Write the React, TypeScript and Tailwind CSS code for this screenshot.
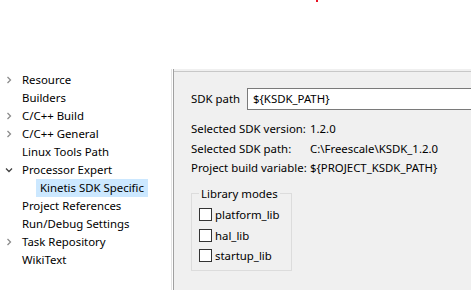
const tree = [
  { label: "Resource", arrow: "right", depth: 0 },
  { label: "Builders", arrow: "none", depth: 0 },
  { label: "C/C++ Build", arrow: "right", depth: 0 },
  { label: "C/C++ General", arrow: "right", depth: 0 },
  { label: "Linux Tools Path", arrow: "none", depth: 0 },
  { label: "Processor Expert", arrow: "down", depth: 0 },
  { label: "Kinetis SDK Specific", arrow: "none", depth: 1, selected: true },
  { label: "Project References", arrow: "none", depth: 0 },
  { label: "Run/Debug Settings", arrow: "none", depth: 0 },
  { label: "Task Repository", arrow: "right", depth: 0 },
  { label: "WikiText", arrow: "none", depth: 0 },
];

const info = [
  { label: "Selected SDK version:", value: "1.2.0" },
  { label: "Selected SDK path:", value: "C:\\Freescale\\KSDK_1.2.0" },
  { label: "Project build variable:", value: "${PROJECT_KSDK_PATH}" },
];

const modes = ["platform_lib", "hal_lib", "startup_lib"];

function Chevron({ dir }: { dir: string }) {
  if (dir === "none") return <span className="w-[22px] shrink-0" />;
  return (
    <span className="flex w-[22px] shrink-0 items-center pl-[5px]">
      <svg width="8" height="8" viewBox="0 0 8 8" fill="none" stroke="#8c8c8c" strokeWidth="1.3">
        {dir === "right" ? <path d="M2.5 1 L5.5 4 L2.5 7" /> : <path d="M1 2.5 L4 5.5 L7 2.5" stroke="#404040" />}
      </svg>
    </span>
  );
}

export default function App() {
  return (
    <div className="relative h-[290px] w-[471px] overflow-hidden whitespace-nowrap bg-white text-[11.4px] text-black [font-family:'Noto_Sans',sans-serif]">
      <span className="absolute left-[316px] top-0 h-[2px] w-[2px] bg-[#e81123]" />
      <div className="flex h-full pt-[69px]">
        <div className="w-[172px] shrink-0 border-r border-[#e3e3e3] pt-[2px]">
          {tree.map((t) => (
            <div key={t.label} className="flex h-[18px] items-center">
              {t.depth === 1 ? <span className="w-[36px] shrink-0" /> : <Chevron dir={t.arrow} />}
              <span className={t.selected ? "bg-[#cce8ff] px-[4px] leading-[18px]" : "leading-[18px]"}>{t.label}</span>
            </div>
          ))}
        </div>
        <div className="w-[1px] shrink-0 bg-white" />
        <div className="flex-1 border-l border-[#a0a0a0] bg-[#f0f0f0]">
          <div className="mt-[2px] h-[2px] border-t border-[#c8c8c8]" />
          <div className="pl-[17px] pt-[15px]">
            <div className="flex items-center">
              <span className="w-[56px]">SDK path</span>
              <div className="flex h-[22px] flex-1 items-center border border-r-0 border-[#7a7a7a] bg-white pl-[5px]">${"{KSDK_PATH}"}</div>
            </div>
            <div className="mt-[9px] flex flex-col">
              {info.map((r) => (
                <div key={r.label} className="flex h-[19.5px] items-center">
                  <span className="w-[119px]">{r.label}</span>
                  <span>{r.value}</span>
                </div>
              ))}
            </div>
            <fieldset className="mt-[8px] w-[101px] border border-[#dcdcdc] px-[7px] pb-[4px]">
              <legend className="px-[2px] leading-[16px]">Library modes</legend>
              <div className="mt-[3px]">
                {modes.map((m) => (
                  <div key={m} className="flex h-[20.5px] items-center gap-[3px]">
                    <span className="h-[13px] w-[13px] border border-[#333333] bg-white" />
                    <span>{m}</span>
                  </div>
                ))}
              </div>
            </fieldset>
          </div>
        </div>
      </div>
    </div>
  );
}
